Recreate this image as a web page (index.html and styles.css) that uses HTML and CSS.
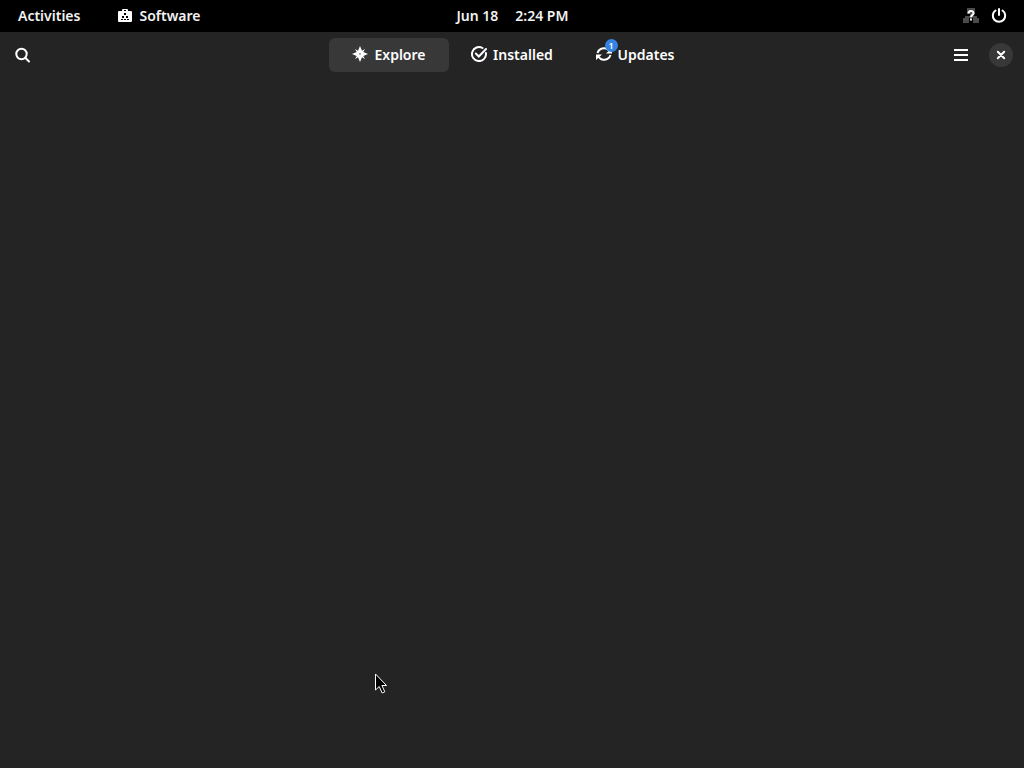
FILE: index.html
```html
<!DOCTYPE html>
<html lang="en">
<head>
    <meta charset="UTF-8">
    <meta name="viewport" content="width=device-width, initial-scale=1.0">
    <title>Software</title>
    <link rel="stylesheet" href="styles.css">
</head>
<body>
    <div class="desktop">
        <!-- Top panel -->
        <header class="panel">
            <div class="panel-left">
                <button class="panel-btn">Activities</button>
                <button class="panel-btn">
                    <svg class="icon" viewBox="0 0 16 16" fill="#fff">
                        <path fill-rule="evenodd" d="M5 4V3a1 1 0 0 1 1-1h4a1 1 0 0 1 1 1v1h3a1 1 0 0 1 1 1v9a1 1 0 0 1-1 1H2a1 1 0 0 1-1-1V5a1 1 0 0 1 1-1zM7 3v1h2V3zM7 6v2h2V6zM5 9v2h2V9zM9 9v2h2V9zM4 12v1h2v-1zM7 12v1h2v-1zM10 12v1h2v-1z"/>
                    </svg>
                    Software
                </button>
            </div>
            <button class="panel-btn clock"><span>Jun 18</span><span>2:24 PM</span></button>
            <div class="panel-right">
                <button class="panel-btn status" aria-label="System menu">
                    <svg class="icon" viewBox="0 0 16 16">
                        <path d="M4 1h8v6H9v2h5v2h2v5h-6v-5H6v5H0v-5h2V9h5V7H4z" fill="#4a4a4a"/>
                        <path d="M5.500 6.500C5.500 3.300 10.500 3.300 10.500 6.200c0 2-2.500 1.800-2.500 4" fill="none" stroke="#fff" stroke-width="2"/>
                        <path d="M7 11.500h2v2H7z" fill="#fff"/>
                    </svg>
                    <svg class="icon" viewBox="0 0 16 16" fill="none" stroke="#fff" stroke-width="2" stroke-linecap="round">
                        <path d="M4.500 3.500a6.200 6.200 0 1 0 7 0M8 2v6"/>
                    </svg>
                </button>
            </div>
        </header>

        <!-- Window header bar -->
        <nav class="headerbar">
            <div class="headerbar-start">
                <button class="icon-btn" aria-label="Search">
                    <svg class="icon" viewBox="0 0 16 16" fill="none" stroke="#fff" stroke-width="2" stroke-linecap="round">
                        <circle cx="6.500" cy="7" r="5.200"/>
                        <path d="M10.500 11l3.500 3.500"/>
                    </svg>
                </button>
            </div>
            <div class="switcher">
                <button class="tab active">
                    <svg class="icon" viewBox="0 0 16 16" fill="#fff">
                        <path fill-rule="evenodd" d="M8 0l2 4.700L13 3l-1.700 3L16 8l-4.700 2 1.700 3-3-1.700L8 16l-2-4.700L3 13l1.700-3L0 8l4.700-2L3 3l3 1.700zM8 7.200a.8.8 0 1 0 0 1.600.8.8 0 0 0 0-1.600z"/>
                    </svg>
                    Explore
                </button>
                <button class="tab">
                    <svg class="icon" viewBox="0 0 16 16" fill="none" stroke="#fff" stroke-width="2" stroke-linecap="round">
                        <path d="M11.500 2A7 7 0 1 0 14.900 7"/>
                        <path d="M4.800 7.500l3 3L15 3"/>
                    </svg>
                    Installed
                </button>
                <button class="tab">
                    <span class="icon-wrap">
                        <svg class="icon" viewBox="0 0 16 16" fill="none" stroke="#fff" stroke-width="2">
                            <path d="M1.500 7C2.500 3.500 6 1.800 9 2.300c2 .3 3.500 1.500 4.500 3"/>
                            <path d="M14.500 9c-1 3.500-4.500 5.200-7.500 4.700-2-.3-3.500-1.500-4.500-3"/>
                            <path d="M0 14V8.500h6zM16 2v5.500h-6z" fill="#fff" stroke="none"/>
                        </svg>
                        <span class="badge">1</span>
                    </span>
                    Updates
                </button>
            </div>
            <div class="headerbar-end">
                <button class="icon-btn" aria-label="Main menu">
                    <svg class="icon" viewBox="0 0 16 16" fill="#fff">
                        <path d="M1 2h14v2H1zM1 7h14v2H1zM1 12h14v2H1z"/>
                    </svg>
                </button>
                <button class="close-btn" aria-label="Close">
                    <svg class="icon" viewBox="0 0 16 16" fill="none" stroke="#fff" stroke-width="2" stroke-linecap="round">
                        <path d="M4.800 4.800l6.400 6.400M11.200 4.800l-6.400 6.400"/>
                    </svg>
                </button>
            </div>
        </nav>

        <main class="content"></main>

        <!-- Mouse pointer -->
        <svg class="pointer" viewBox="0 0 14 24">
            <path d="M1.500 2v16l3.700-3.500 3 6.500 2.600-1.200-2.900-6.300h4.600z" fill="#000" stroke="#fff"/>
        </svg>
    </div>
</body>
</html>
```

FILE: styles.css
```css
body {
    margin: 0;
    background-color: #242424;
    color: #fff;
    font-family: "Noto Sans", "Open Sans", sans-serif;
    font-size: 14px;
    font-weight: 600;
}

button {
    border: none;
    padding: 0;
    background: none;
    color: inherit;
    font: inherit;
}

.desktop {
    position: relative;
    display: flex;
    flex-direction: column;
    min-height: 100vh;
}

.icon {
    display: block;
    flex: none;
    width: 16px;
    height: 16px;
}

/* Top panel */
.panel {
    display: grid;
    grid-template-columns: 1fr auto 1fr;
    align-items: center;
    box-sizing: border-box;
    height: 32px;
    padding: 0 17px 2px 18px;
    background-color: #000;
    color: #f2f2f2;
}

.panel-left {
    display: flex;
    gap: 37px;
}

.panel-btn {
    display: flex;
    align-items: center;
    gap: 6px;
}

.clock {
    gap: 17px;
}

.panel-right {
    display: flex;
    justify-content: flex-end;
}

.status {
    gap: 12px;
}

/* Window header bar */
.headerbar {
    display: grid;
    grid-template-columns: 1fr auto 1fr;
    align-items: center;
    height: 46px;
    padding: 0 6px;
}

.switcher {
    display: flex;
    gap: 3px;
}

.tab {
    display: flex;
    align-items: center;
    justify-content: center;
    gap: 6px;
    box-sizing: border-box;
    width: 120px;
    height: 34px;
    padding-bottom: 2px;
    border-radius: 6px;
}

.tab:hover {
    background-color: #303030;
}

.tab.active {
    background-color: #383838;
}

.icon-wrap {
    position: relative;
}

.badge {
    position: absolute;
    top: -7px;
    right: -6px;
    width: 13px;
    height: 13px;
    border-radius: 50%;
    background-color: #3584e4;
    font-size: 9px;
    line-height: 13px;
    text-align: center;
}

.icon-btn {
    display: flex;
    align-items: center;
    justify-content: center;
    width: 34px;
    height: 34px;
}

.headerbar-end {
    display: flex;
    align-items: center;
    justify-content: flex-end;
    gap: 11px;
    padding-right: 5px;
}

.close-btn {
    display: flex;
    align-items: center;
    justify-content: center;
    width: 24px;
    height: 24px;
    border-radius: 50%;
    background-color: #383838;
}

.content {
    flex: 1;
}

.pointer {
    position: absolute;
    top: 672px;
    left: 374px;
    width: 14px;
    height: 24px;
}
```
